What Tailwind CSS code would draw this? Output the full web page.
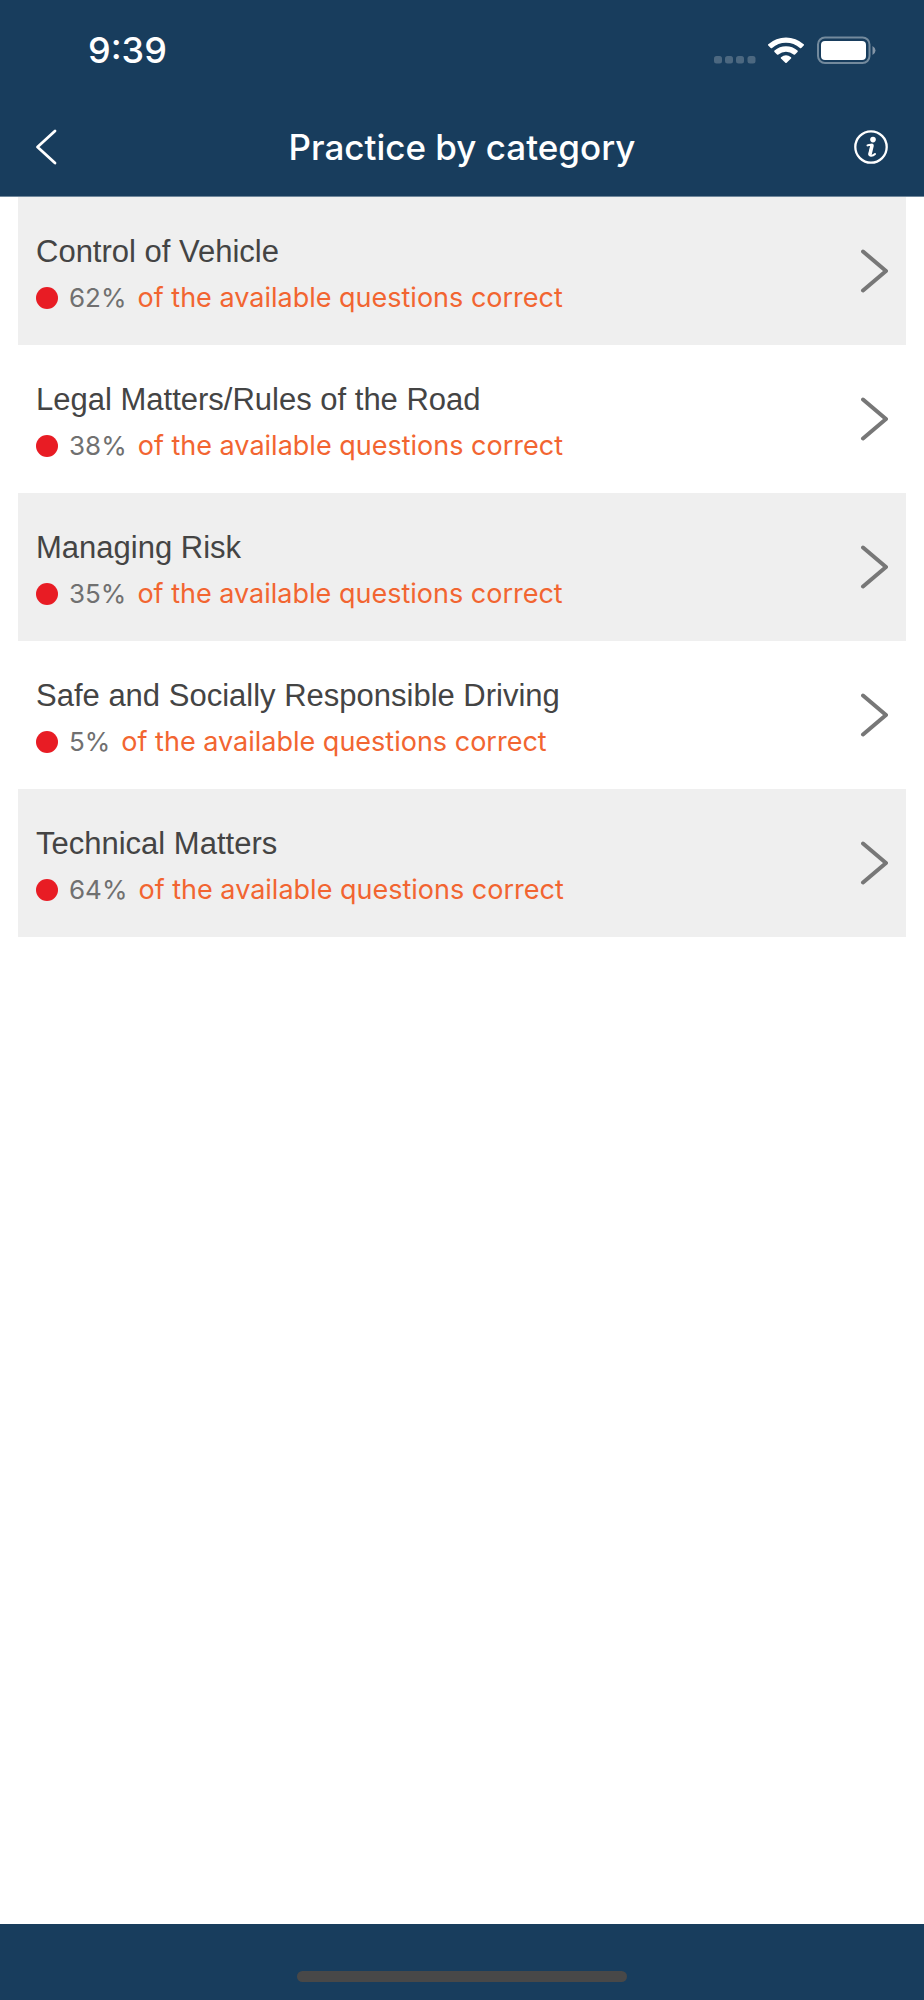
<!DOCTYPE html>
<html lang="en">
<head>
<meta charset="utf-8">
<meta name="viewport" content="width=device-width, initial-scale=1">
<title>Practice by category</title>
<script src="https://cdn.jsdelivr.net/npm/@tailwindcss/browser@4"></script>
</head>
<body class="flex min-h-screen flex-col bg-white font-['Inter',sans-serif]">
<header class="border-b border-[#6f879b] bg-[#183d5d] text-white">
  <div class="flex h-[100px] items-center justify-between pr-12 pl-[88px]">
    <time class="text-[36px] leading-10 font-medium">9:39</time>
    <div class="flex items-center">
      <svg class="h-[28px] w-[164px]" viewBox="0 0 164 28" fill="none" aria-hidden="true">
        <g fill="#4c6880"><rect x="2" y="20" width="8" height="7.500" rx="2.500"/><rect x="13" y="20" width="8" height="7.500" rx="2.500"/><rect x="24" y="20" width="8" height="7.500" rx="2.500"/><rect x="35.500" y="20" width="8" height="7.500" rx="2.500"/></g>
        <g fill="#fff">
          <path d="M56.300 8.200a26.500 26.500 0 0 1 35.400 0q.7.700 0 1.400l-2.400 2.400q-.7.600-1.400 0a21 21 0 0 0-27.800 0q-.7.600-1.400 0l-2.400-2.400q-.7-.7 0-1.400z"/>
          <path d="M62.500 14.600a17.500 17.500 0 0 1 23 0q.7.700 0 1.400l-2.500 2.400q-.7.600-1.400 0a12 12 0 0 0-15.200 0q-.7.600-1.400 0L62.500 16q-.7-.7 0-1.400z"/>
          <path d="M69 21.200a8 8 0 0 1 10 0q.7.700 0 1.400l-4.300 4.200q-.7.600-1.400 0L69 22.600q-.7-.7 0-1.400z"/>
          <rect x="109" y="5" width="45" height="19" rx="4"/>
        </g>
        <rect x="106" y="1.500" width="51.500" height="25.500" rx="7" stroke="#738a9d" stroke-width="2"/>
        <path d="M160.500 10q3 1.600 3 4.500t-3 4.500z" fill="#8496a7"/>
      </svg>
    </div>
  </div>
  <nav class="flex h-[96px] items-center justify-between px-[35px] pb-[2px]">
    <button type="button" aria-label="Back" class="flex w-9 justify-start">
      <svg class="h-9 w-6" viewBox="0 0 24 36" fill="none" stroke="currentColor" stroke-width="2.800" stroke-linecap="round" stroke-linejoin="round"><path d="M20 2 2.500 18 20 34"/></svg>
    </button>
    <h1 class="text-[35px] leading-10 font-medium">Practice by category</h1>
    <button type="button" aria-label="Information" class="flex w-9 justify-end">
      <svg class="size-9" viewBox="0 0 36 36" fill="none" stroke="currentColor" stroke-linecap="round" stroke-linejoin="round"><circle cx="18" cy="18" r="15.700" stroke-width="2.300"/><circle cx="20" cy="10.600" r="2.800" fill="currentColor" stroke="none"/><path d="M14.500 16.400q2-.9 4.500-.6l-2.300 8.400q-.6 2.700 1.600 2.500 2 0 3.700-1.700" stroke-width="2"/><path d="M19 16.600 17 25.200" stroke-width="3.600"/></svg>
    </button>
  </nav>
</header>
<main class="flex-1 px-[18px]">
  <ul>
    <li class="odd:bg-[#efefef]">
      <a href="#control" class="flex h-[148px] items-center justify-between px-[18px]">
        <span class="flex flex-col gap-[10px] pt-2">
          <span class="font-['Liberation_Sans',sans-serif] text-[31px] leading-9 text-[#444]">Control of Vehicle</span>
          <span class="flex items-center gap-[11px] text-[26px] leading-9"><span class="size-[22px] rounded-full bg-[#e81c24]"></span><span class="text-[#707070]">62%</span><span class="text-[27px] text-[#f26531]">of the available questions correct</span></span>
        </span>
        <svg class="h-11 w-7" viewBox="0 0 28 44" fill="none" stroke="#777" stroke-width="4" stroke-linecap="round" stroke-linejoin="round"><path d="M3 2.500 26 22 3 41.500"/></svg>
      </a>
    </li>
    <li class="odd:bg-[#efefef]">
      <a href="#legal" class="flex h-[148px] items-center justify-between px-[18px]">
        <span class="flex flex-col gap-[10px] pt-2">
          <span class="font-['Liberation_Sans',sans-serif] text-[31px] leading-9 text-[#444]">Legal Matters/Rules of the Road</span>
          <span class="flex items-center gap-[11px] text-[26px] leading-9"><span class="size-[22px] rounded-full bg-[#e81c24]"></span><span class="text-[#707070]">38%</span><span class="text-[27px] text-[#f26531]">of the available questions correct</span></span>
        </span>
        <svg class="h-11 w-7" viewBox="0 0 28 44" fill="none" stroke="#777" stroke-width="4" stroke-linecap="round" stroke-linejoin="round"><path d="M3 2.500 26 22 3 41.500"/></svg>
      </a>
    </li>
    <li class="odd:bg-[#efefef]">
      <a href="#risk" class="flex h-[148px] items-center justify-between px-[18px]">
        <span class="flex flex-col gap-[10px] pt-2">
          <span class="font-['Liberation_Sans',sans-serif] text-[31px] leading-9 text-[#444]">Managing Risk</span>
          <span class="flex items-center gap-[11px] text-[26px] leading-9"><span class="size-[22px] rounded-full bg-[#e81c24]"></span><span class="text-[#707070]">35%</span><span class="text-[27px] text-[#f26531]">of the available questions correct</span></span>
        </span>
        <svg class="h-11 w-7" viewBox="0 0 28 44" fill="none" stroke="#777" stroke-width="4" stroke-linecap="round" stroke-linejoin="round"><path d="M3 2.500 26 22 3 41.500"/></svg>
      </a>
    </li>
    <li class="odd:bg-[#efefef]">
      <a href="#responsible" class="flex h-[148px] items-center justify-between px-[18px]">
        <span class="flex flex-col gap-[10px] pt-2">
          <span class="font-['Liberation_Sans',sans-serif] text-[31px] leading-9 text-[#444]">Safe and Socially Responsible Driving</span>
          <span class="flex items-center gap-[11px] text-[26px] leading-9"><span class="size-[22px] rounded-full bg-[#e81c24]"></span><span class="text-[#707070]">5%</span><span class="text-[27px] text-[#f26531]">of the available questions correct</span></span>
        </span>
        <svg class="h-11 w-7" viewBox="0 0 28 44" fill="none" stroke="#777" stroke-width="4" stroke-linecap="round" stroke-linejoin="round"><path d="M3 2.500 26 22 3 41.500"/></svg>
      </a>
    </li>
    <li class="odd:bg-[#efefef]">
      <a href="#technical" class="flex h-[148px] items-center justify-between px-[18px]">
        <span class="flex flex-col gap-[10px] pt-2">
          <span class="font-['Liberation_Sans',sans-serif] text-[31px] leading-9 text-[#444]">Technical Matters</span>
          <span class="flex items-center gap-[11px] text-[26px] leading-9"><span class="size-[22px] rounded-full bg-[#e81c24]"></span><span class="text-[#707070]">64%</span><span class="text-[27px] text-[#f26531]">of the available questions correct</span></span>
        </span>
        <svg class="h-11 w-7" viewBox="0 0 28 44" fill="none" stroke="#777" stroke-width="4" stroke-linecap="round" stroke-linejoin="round"><path d="M3 2.500 26 22 3 41.500"/></svg>
      </a>
    </li>
  </ul>
</main>
<footer class="flex h-[76px] items-end justify-center bg-[#183d5d] pb-[18px]">
  <div class="h-[11px] w-[330px] rounded-full bg-[#484848]"></div>
</footer>
</body>
</html>
